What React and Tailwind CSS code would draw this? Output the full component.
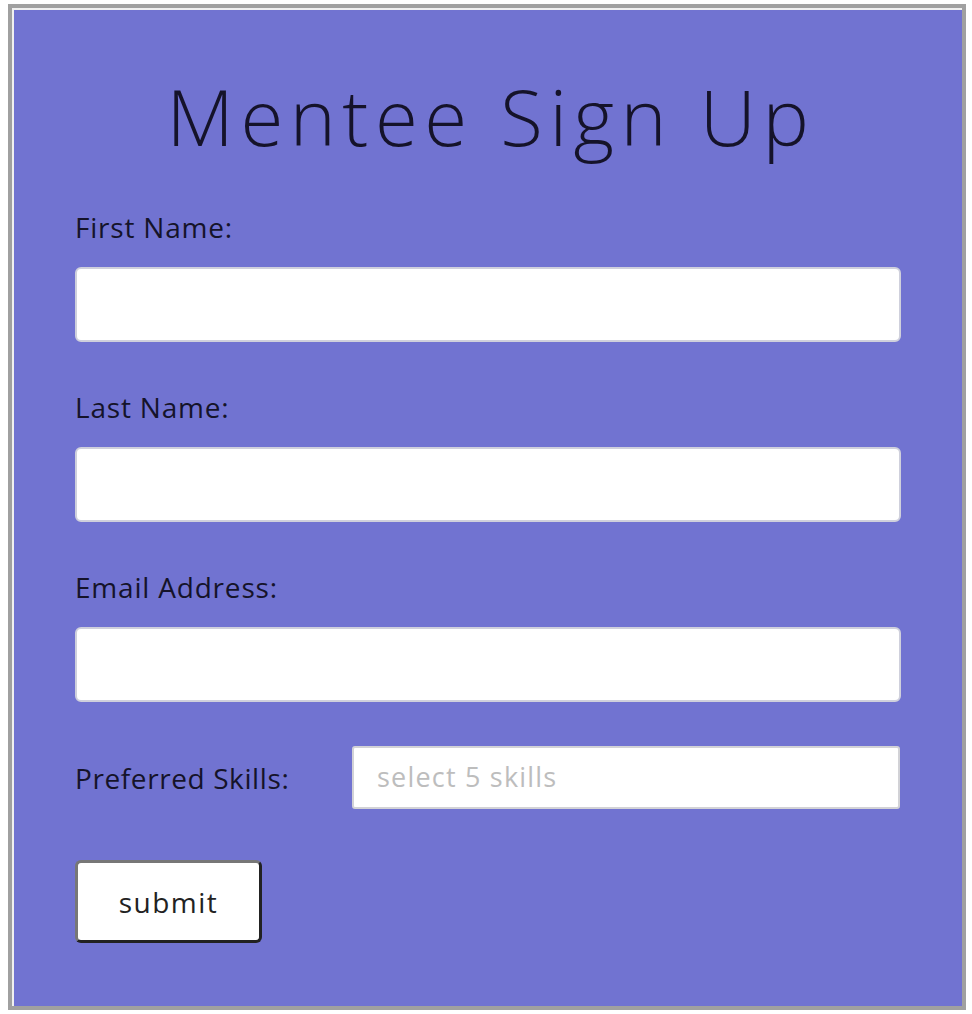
import React from 'react'

const fields = ['First Name:', 'Last Name:', 'Email Address:']

const App = () => {
  return (
    <div className="min-h-[1014px] bg-white pt-1 pl-2" style={{ fontFamily: '"Open Sans", "Liberation Sans", sans-serif' }}>
      <div className="w-[958px] h-[1006px] border-4 border-[#a0a0a0]">
        <div className="h-full border-t-2 border-l-2 border-[#f0f0f0] bg-[#7173d1] px-[61px]">
          <h1 className="pt-[56px] pl-[6px] text-center text-[78px] leading-[100px] font-light tracking-[6.5px] text-[#15132a]">
            Mentee Sign Up
          </h1>
          <form className="mt-[43px] flex flex-col" onSubmit={(e) => e.preventDefault()}>
            {fields.map((label) => (
              <div key={label} className="mb-[47px] flex flex-col">
                <label className="text-[28px] leading-[36px] tracking-[0.8px] text-[#15132a]">{label}</label>
                <input
                  type="text"
                  className="mt-[22px] h-[75px] w-full rounded-md border-2 border-[#cfd0dc] bg-white px-4 text-2xl outline-none"
                />
              </div>
            ))}
            <div className="-mt-[3px] flex items-center">
              <label className="w-[277px] text-[28px] leading-[36px] tracking-[0.6px] text-[#15132a]">Preferred Skills:</label>
              <div className="flex h-[63px] w-[548px] items-center rounded-[3px] border-2 border-[#d2d2d6] bg-white px-[23px] text-[27px] tracking-[1.2px] text-[#bdbdbd]">
                select 5 skills
              </div>
            </div>
            <div className="mt-[51px]">
              <button
                type="submit"
                className="h-[83px] w-[187px] rounded-md border-[3px] border-t-[#777] border-l-[#777] border-r-[#222] border-b-[#222] bg-white text-[28px] tracking-[1.5px] text-[#222]"
              >
                submit
              </button>
            </div>
          </form>
        </div>
      </div>
    </div>
  )
}

export default App
